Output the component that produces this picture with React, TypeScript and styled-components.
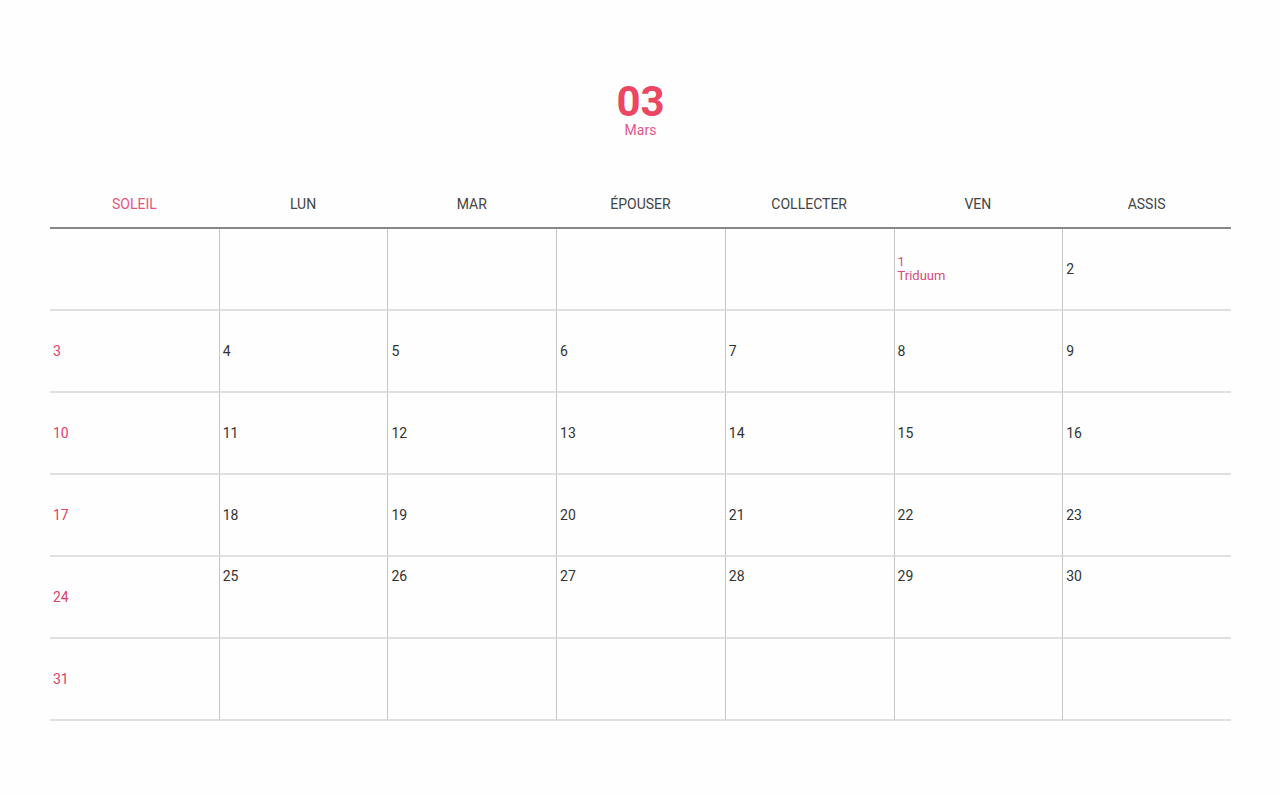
import React from "react";
import styled, { createGlobalStyle } from "styled-components";

const GlobalStyle = createGlobalStyle`
    body {
        margin: 0;
        background: #fefefe;
        font-family: Roboto, "Liberation Sans", Arial, sans-serif;
    }
`

const Page = styled.div`
    padding: 83px 49px 0 50px;
`

const Title = styled.div`
    display: flex;
    flex-direction: column;
    align-items: center;
    margin-bottom: 44px;
`

const MonthNumber = styled.div`
    font-size: 42px;
    line-height: 38px;
    font-weight: 700;
    color: #ec4663;
`

const MonthName = styled.div`
    margin-top: 2px;
    font-size: 14px;
    line-height: 14px;
    color: #e4568a;
`

const Table = styled.table`
    width: 1181px;
    table-layout: fixed;
    border-collapse: separate;
    border-spacing: 0;
`

const HeadCell = styled.th<{ $sunday?: boolean }>`
    height: 46px;
    padding: 0;
    border-bottom: 2px solid #878787;
    font-size: 14px;
    font-weight: 400;
    text-align: center;
    vertical-align: middle;
    color: ${p => p.$sunday ? '#e5557f' : '#444'};
`

const Cell = styled.td<{ $first?: boolean; $top?: boolean }>`
    height: ${p => p.$top ? '69px' : '80px'};
    padding: ${p => p.$top ? '11px 3px 0' : '0 3px'};
    border-bottom: 2px solid #e0e0e0;
    border-left: ${p => p.$first ? 'none' : '1px solid #c6c6c6'};
    vertical-align: ${p => p.$top ? 'top' : 'middle'};
    font-size: 14px;
    line-height: 16px;
    color: ${p => p.$first ? '#e2406a' : '#333'};
`

const Holiday = styled.div`
    font-size: 13px;
    line-height: 14px;
    color: #dc4a7a;
`

const jours = ['SOLEIL', 'LUN', 'MAR', 'ÉPOUSER', 'COLLECTER', 'VEN', 'ASSIS']

type Jour = { n?: number; fete?: string }

const semaines: Jour[][] = [
    [{}, {}, {}, {}, {}, { n: 1, fete: 'Triduum' }, { n: 2 }],
    [3, 4, 5, 6, 7, 8, 9].map(n => ({ n })),
    [10, 11, 12, 13, 14, 15, 16].map(n => ({ n })),
    [17, 18, 19, 20, 21, 22, 23].map(n => ({ n })),
    [24, 25, 26, 27, 28, 29, 30].map(n => ({ n })),
    [{ n: 31 }, {}, {}, {}, {}, {}, {}],
]

const App = () => {
    return (
        <Page>
            <GlobalStyle />
            <Title>
                <MonthNumber>03</MonthNumber>
                <MonthName>Mars</MonthName>
            </Title>
            <Table>
                <thead>
                    <tr>
                        {jours.map((j, i) => (
                            <HeadCell key={j} $sunday={i === 0}>{j}</HeadCell>
                        ))}
                    </tr>
                </thead>
                <tbody>
                    {semaines.map((semaine, w) => (
                        <tr key={w}>
                            {semaine.map((jour, d) => (
                                <Cell key={d} $first={d === 0} $top={w === 4 && d > 0}>
                                    {jour.fete ? (
                                        <Holiday>{jour.n}<br />{jour.fete}</Holiday>
                                    ) : jour.n}
                                </Cell>
                            ))}
                        </tr>
                    ))}
                </tbody>
            </Table>
        </Page>
    );
};

export default App
